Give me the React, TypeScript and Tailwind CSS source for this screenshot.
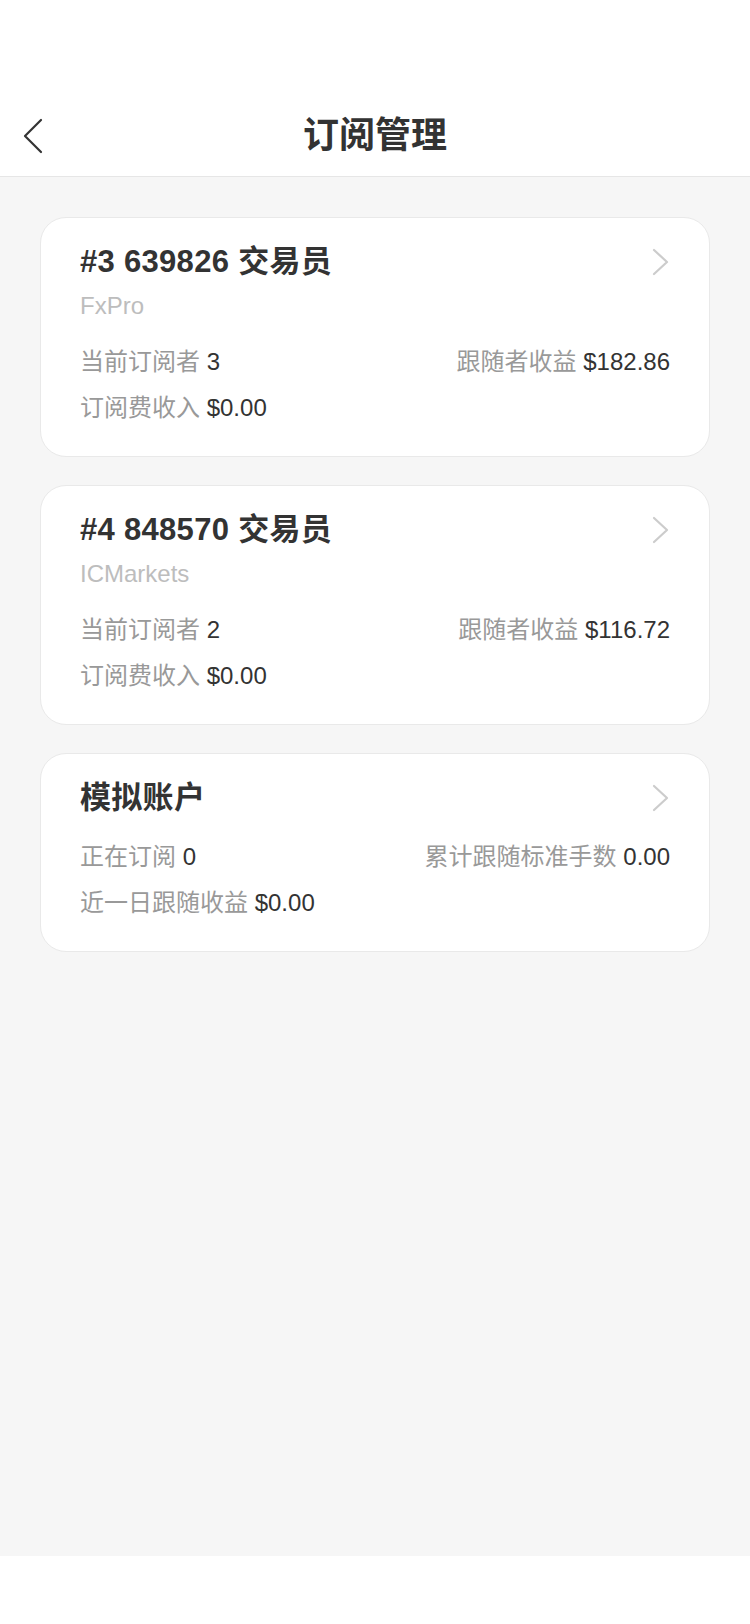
import React from "react";

interface Stat {
  label: string;
  value: string;
}

interface CardProps {
  title: string;
  broker?: string;
  left: Stat;
  right: Stat;
  bottom: Stat;
}

const Chevron: React.FC<{ className?: string }> = ({ className }) => (
  <svg viewBox="0 0 18 28" className={className} fill="none">
    <path d="M2 2 L15 14 L2 26" stroke="currentColor" strokeWidth="2.2" strokeLinecap="round" strokeLinejoin="round" />
  </svg>
);

const StatText: React.FC<{ stat: Stat }> = ({ stat }) => (
  <span className="whitespace-nowrap">
    <span className="text-[#999999]">{stat.label}</span>
    <span className="text-[#333333]"> {stat.value}</span>
  </span>
);

const SubscriptionCard: React.FC<CardProps> = ({ title, broker, left, right, bottom }) => {
  return (
    <div className="bg-white rounded-[26px] border border-[#e9e9e9] pt-[23px] pb-[30px] px-[39px]">
      <div className="flex items-center justify-between h-[42px]">
        <p className="text-[31px] leading-[42px] font-semibold tracking-[0.3px] text-[#333333]">{title}</p>
        <Chevron className="w-[18px] h-[28px] text-[#cccccc]" />
      </div>
      {broker && (
        <p className="mt-[6px] text-[24px] leading-[34px] text-[#bdbdbd]">{broker}</p>
      )}
      <div className={`flex justify-between text-[24px] leading-[36px] ${broker ? "mt-[21px]" : "mt-[20px]"}`}>
        <StatText stat={left} />
        <StatText stat={right} />
      </div>
      <div className="mt-[10px] text-[24px] leading-[36px]">
        <StatText stat={bottom} />
      </div>
    </div>
  );
};

const App: React.FC = () => {
  return (
    <div
      className="flex flex-col w-[750px] h-[1624px] bg-white"
      style={{ fontFamily: '"Liberation Sans", "Noto Sans CJK SC", sans-serif' }}
    >
      <div className="h-[96px]" />
      <div className="relative h-[81px] flex items-center justify-center border-b border-[#e6e6e6]">
        <button className="absolute left-[22px] top-[22px] text-[#333333]">
          <svg viewBox="0 0 22 36" className="w-[22px] h-[36px]" fill="none">
            <path d="M19 2 L3 18 L19 34" stroke="currentColor" strokeWidth="2.2" strokeLinecap="round" strokeLinejoin="round" />
          </svg>
        </button>
        <h1 className="text-[36px] leading-[48px] font-semibold text-[#333333]">订阅管理</h1>
      </div>
      <div className="flex-1 bg-[#f6f6f6] px-[40px] pt-[40px] flex flex-col gap-[28px]">
        <SubscriptionCard
          title="#3 639826 交易员"
          broker="FxPro"
          left={{ label: "当前订阅者", value: "3" }}
          right={{ label: "跟随者收益", value: "$182.86" }}
          bottom={{ label: "订阅费收入", value: "$0.00" }}
        />
        <SubscriptionCard
          title="#4 848570 交易员"
          broker="ICMarkets"
          left={{ label: "当前订阅者", value: "2" }}
          right={{ label: "跟随者收益", value: "$116.72" }}
          bottom={{ label: "订阅费收入", value: "$0.00" }}
        />
        <SubscriptionCard
          title="模拟账户"
          left={{ label: "正在订阅", value: "0" }}
          right={{ label: "累计跟随标准手数", value: "0.00" }}
          bottom={{ label: "近一日跟随收益", value: "$0.00" }}
        />
      </div>
      <div className="h-[68px] bg-white" />
    </div>
  );
};

export default App;
